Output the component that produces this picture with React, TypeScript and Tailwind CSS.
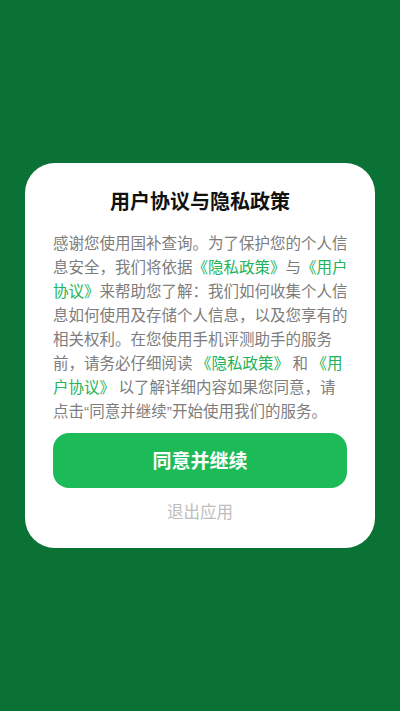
import React from "react";

const G = ({ children }: { children: React.ReactNode }) => (
  <span className="text-[#22b35a]">{children}</span>
);

const Q = ({ children }: { children: React.ReactNode }) => (
  <span style={{ fontFamily: '"Liberation Sans", sans-serif' }}>{children}</span>
);

export default function App() {
  const lines: React.ReactNode[] = [
    <>感谢您使用国补查询。为了保护您的个人信</>,
    <>息安全，我们将依据<G>《隐私政策》</G>与<G>《用户</G></>,
    <><G>协议》</G>来帮助您了解：我们如何收集个人信</>,
    <>息如何使用及存储个人信息，以及您享有的</>,
    <>相关权利。在您使用手机评测助手的服务</>,
    <>前，请务必仔细阅读 <G>《隐私政策》</G> 和 <G>《用</G></>,
    <><G>户协议》</G> 以了解详细内容如果您同意，请</>,
    <>点击<Q>“</Q>同意并继续<Q>”</Q>开始使用我们的服务。</>,
  ];
  return (
    <div
      className="w-[400px] h-[711px] bg-[#0a7235] flex items-center justify-center"
      style={{ fontFamily: '"Noto Sans CJK SC", "Noto Sans", sans-serif' }}
    >
      <div className="w-[350px] bg-white rounded-[30px] px-[28px] pt-[25px] pb-[25px] flex flex-col">
        <div className="text-center text-[20px] leading-[26px] font-bold text-[#111]">
          用户协议与隐私政策
        </div>
        <div className="mt-[16px] text-[15.5px] leading-[24px] text-[#7d7d7d] whitespace-nowrap">
          {lines.map((l, i) => (
            <div key={i}>{l}</div>
          ))}
        </div>
        <button className="mt-[9px] h-[55px] w-full rounded-[16px] bg-[#1dba58] text-white text-[19px] font-bold">
          同意并继续
        </button>
        <div className="mt-[11px] text-center text-[16.5px] leading-[24px] text-[#bdbdbd]">
          退出应用
        </div>
      </div>
    </div>
  );
}
